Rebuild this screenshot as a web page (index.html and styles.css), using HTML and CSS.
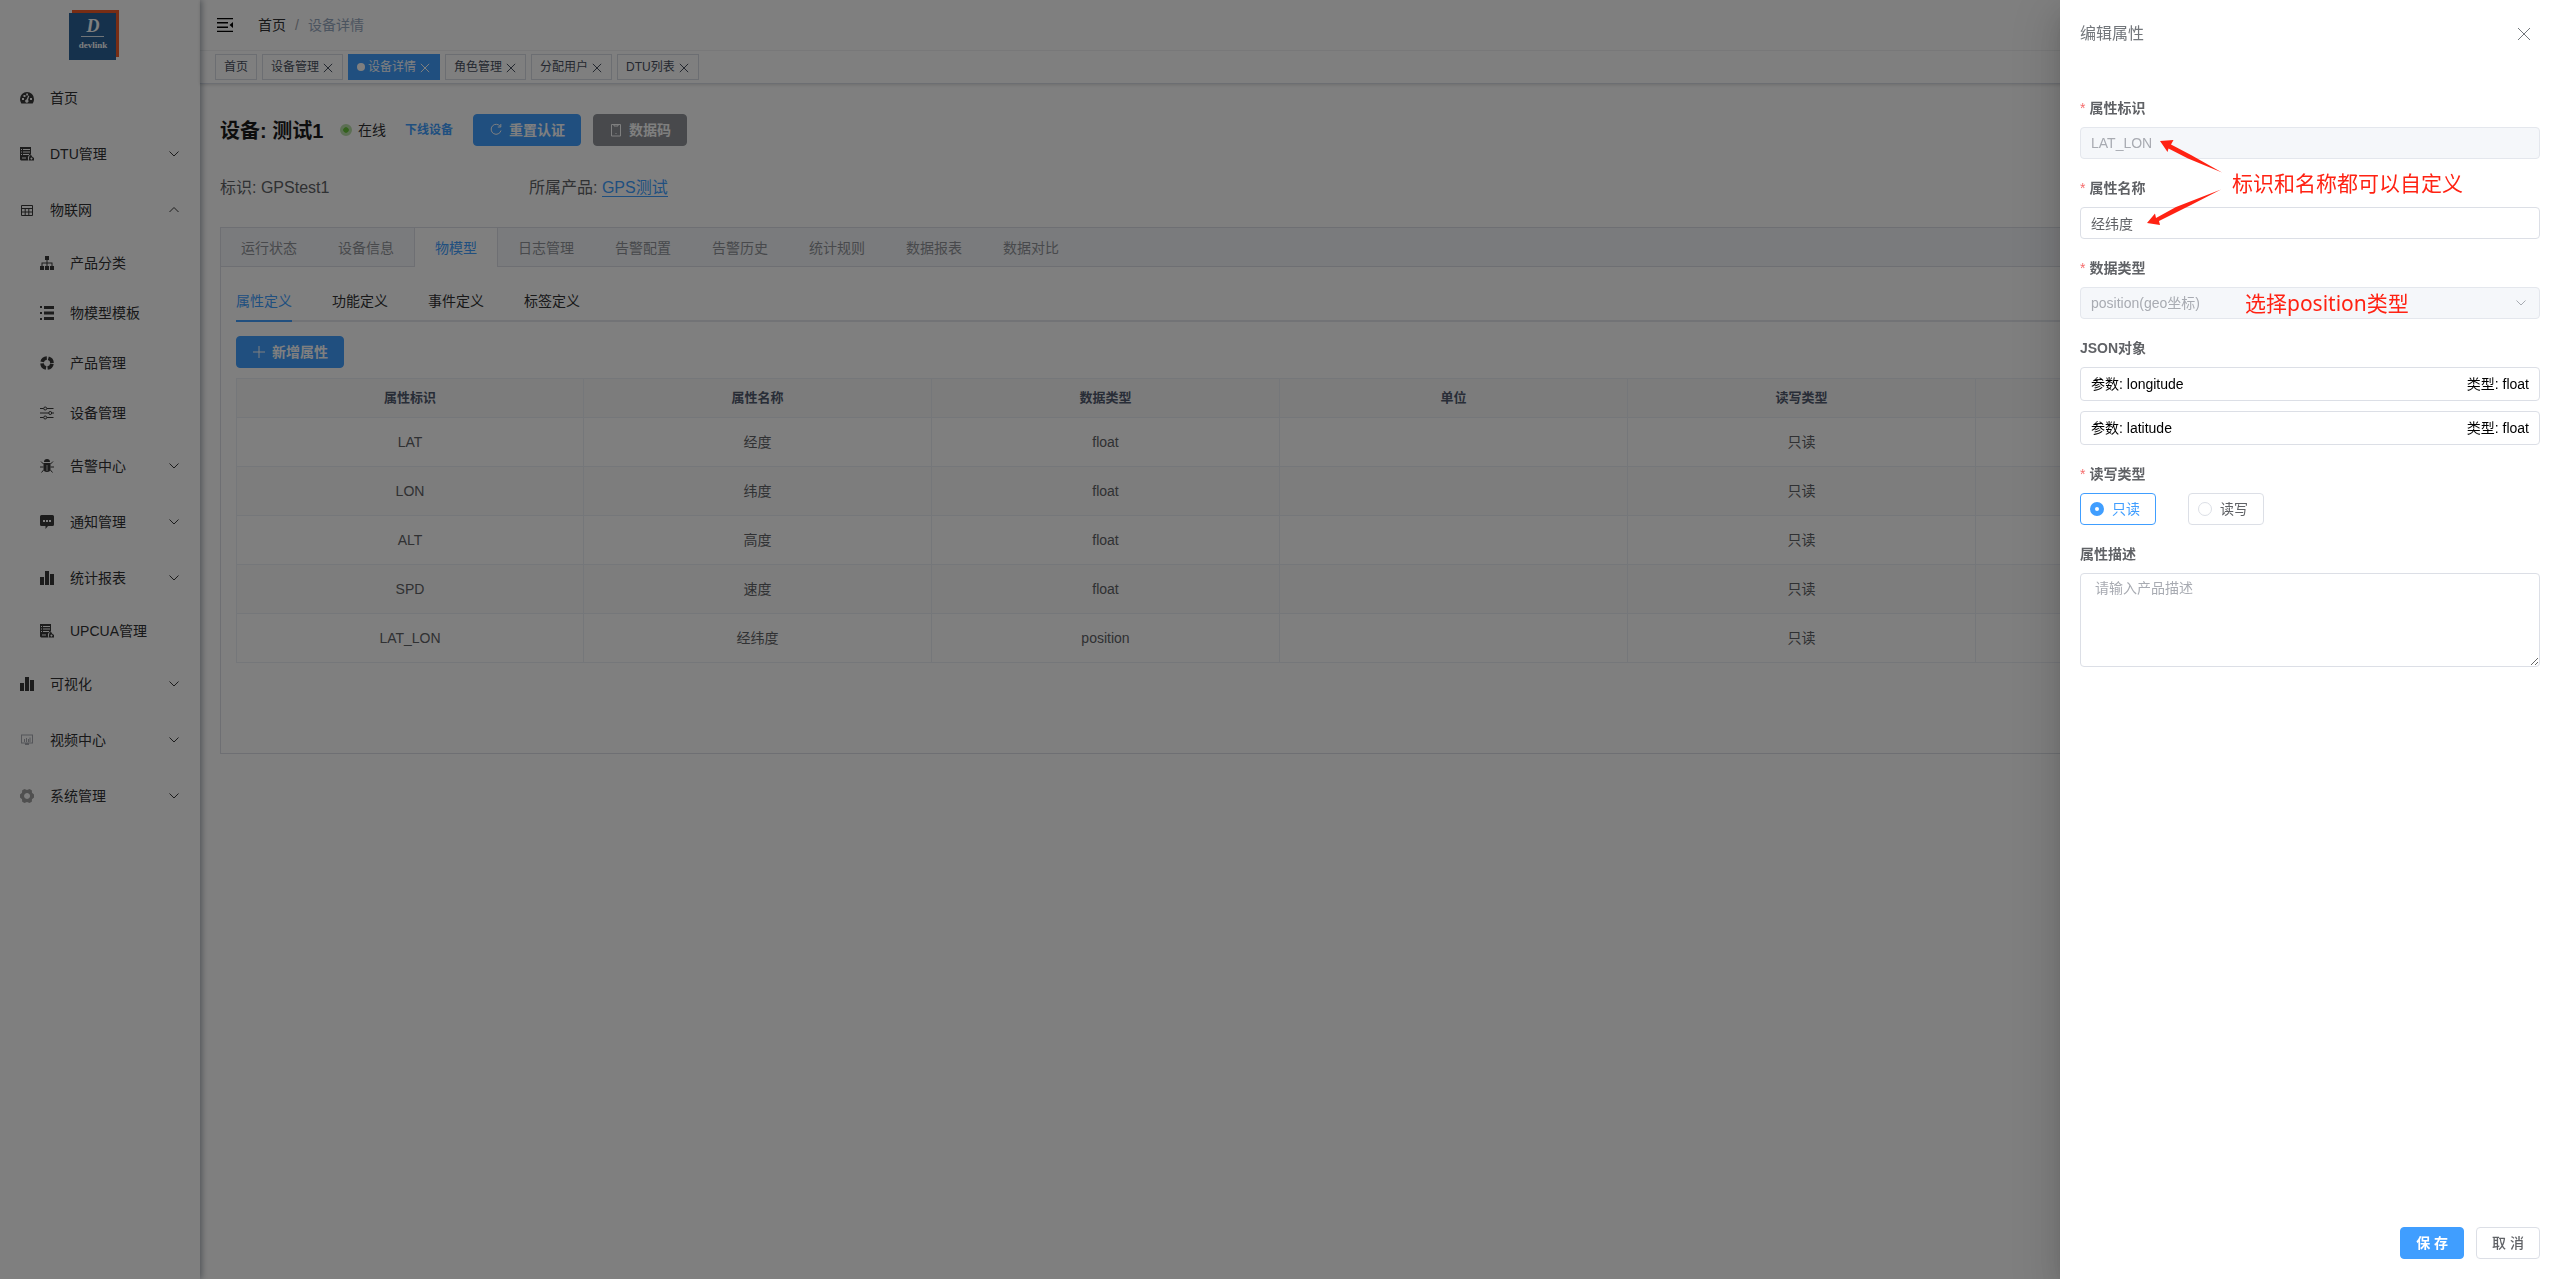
FILE: index.html
```html
<!DOCTYPE html>
<html lang="zh-CN">
<head>
<meta charset="utf-8">
<title>设备详情</title>
<link rel="stylesheet" href="styles.css">
</head>
<body>
<svg class="sprite" aria-hidden="true">
  <symbol id="i-down" viewBox="0 0 12 12"><path d="M1.5 3.5 6 8l4.500-4.500" fill="none" stroke="currentColor"/></symbol>
  <symbol id="i-up" viewBox="0 0 12 12"><path d="M1.500 8 6 3.500 10.500 8" fill="none" stroke="currentColor"/></symbol>
  <symbol id="i-close" viewBox="0 0 12 12"><path d="M1 1l10 10M11 1 1 11" fill="none" stroke="currentColor" stroke-width="1.200"/></symbol>
  <symbol id="i-dash" viewBox="0 0 14 14"><path fill-rule="evenodd" d="M7 1a7 7 0 0 1 7 7c0 1.800-.5 3.200-1.300 4.500H1.300A8 8 0 0 1 0 8a7 7 0 0 1 7-7ZM2 7v2h2V7Zm1.500-3v2h2V4ZM6.200 2.500v2h1.800v-2ZM10 7v2h2V7ZM8.300 4.500 6.500 8.500a1.600 1.600 0 1 0 1.500.5l1.300-4Z"/></symbol>
  <symbol id="i-form" viewBox="0 0 14 14"><path fill-rule="evenodd" d="M0 0h11v7.500a3.500 3.500 0 0 0-3 4.500l.5 1.500H1L0 12.500ZM1 2v1h1V2Zm2 0v1h7V2ZM1 4.500v1h1v-1Zm2 0v1h7v-1ZM1 7v1h1V7Zm2 0v1h6V7ZM2 10.500h4v1H2Z"/><path fill-rule="evenodd" d="M10.500 8a1.500 1.500 0 0 1 1.500 1.500l2 1.500v2.500H9V11l.3-1.500A1.500 1.500 0 0 1 10.500 8Zm.9 2.600a1 1 0 1 0 .1 0Z"/></symbol>
  <symbol id="i-table" viewBox="0 0 14 14"><path fill="none" stroke="currentColor" d="M1.500 2.500h11v10h-11ZM1.500 5.500h11M1.500 9h11M5.200 5.500v7M8.800 5.500v7"/></symbol>
  <symbol id="i-tree" viewBox="0 0 14 14"><path d="M5 0h4v4H7.500v2.500h5V10H14v4h-4v-4h1.500V7.500h-4V10H9v4H5v-4h1.500V7.500h-4V10H4v4H0v-4h1.500V6.500h5V4H5Z"/></symbol>
  <symbol id="i-list" viewBox="0 0 14 14"><path d="M0 0h2v2H0Zm4 0h10v3H4ZM0 6h2v2H0Zm4-.5h10v3H4ZM0 12h2v2H0Zm4-1h10v3H4Z"/></symbol>
  <symbol id="i-ring" viewBox="0 0 14 14"><circle cx="7" cy="7" r="5" fill="none" stroke="currentColor" stroke-width="3.600" stroke-dasharray="6.250 1.604" stroke-dashoffset="-.8"/></symbol>
  <symbol id="i-tune" viewBox="0 0 14 14"><path d="M0 2.500h3.500M7 2.500h6.500M0 7h8.500M12 7h2M0 11.500h3.500M7 11.500h6.500" stroke="currentColor" fill="none"/><g fill="none" stroke="currentColor"><circle cx="5.200" cy="2.500" r="1.500"/><circle cx="10.200" cy="7" r="1.500"/><circle cx="5.200" cy="11.500" r="1.500"/></g></symbol>
  <symbol id="i-bug" viewBox="0 0 14 14"><path d="M4 3a3 3 0 0 1 6 0ZM3.500 4h7v5.500a3.500 3.500 0 0 1-7 0Z"/><path d="M1 2.500 3.500 5M13 2.500 10.500 5M0 8h3.500M10.500 8H14M1.500 13.500 4 10.500M12.500 13.500 10 10.500" stroke="currentColor" fill="none"/><path d="M7 6v6" stroke="#fff" stroke-width=".7"/></symbol>
  <symbol id="i-msg" viewBox="0 0 14 14"><path fill-rule="evenodd" d="M1.500 0h11A1.500 1.500 0 0 1 14 1.500v8a1.500 1.500 0 0 1-1.500 1.500H8l-2.500 3V11h-4A1.500 1.500 0 0 1 0 9.500v-8A1.500 1.500 0 0 1 1.500 0ZM3 5v2h2V5Zm3 0v2h2V5Zm3 0v2h2V5Z"/></symbol>
  <symbol id="i-bars" viewBox="0 0 14 14"><path d="M0 6h4v8H0ZM5 0h4v14H5ZM10 3h4v11h-4Z"/></symbol>
  <symbol id="i-screen" viewBox="0 0 14 14"><path fill-rule="evenodd" d="M1 1.500h12v9H9v1.500H5v-1.500H1ZM2 2.500v7h10v-7ZM4 6h1v3H4Zm2-1h1v4H6Zm2 1h1v3H8Zm1.500-1.500h1V9h-1Z"/></symbol>
  <symbol id="i-gear" viewBox="0 0 14 14"><path fill-rule="evenodd" d="M4.500 0 7 1l2.500-1 2.300 1.300.2 2.500 2 1.700v3L12 10.200l-.2 2.500L9.500 14 7 13l-2.500 1-2.300-1.300L2 10.200 0 8.500v-3l2-1.700.2-2.500ZM7 4a3 3 0 1 0 .1 0Z"/></symbol>
</svg>

<div class="app">
  <aside class="sidebar">
    <div class="logo">
      <svg width="50" height="50" viewBox="0 0 50 50" role="img" aria-label="devlink">
        <path d="M3 0h47v47H3Z" fill="#f05a28"/><path d="M0 3h47v47H0Z" fill="#2b6299"/>
        <path d="M12 26.500h23" stroke="#dfe8f0"/>
        <text x="24" y="22" class="logo-d">D</text>
        <text x="24" y="38" class="logo-name">devlink</text>
      </svg>
    </div>
    <nav class="menu">
      <a href="#" class="item"><svg><use href="#i-dash"/></svg><span>首页</span></a>
      <a href="#" class="item"><svg><use href="#i-form"/></svg><span>DTU管理</span><svg class="arrow"><use href="#i-down"/></svg></a>
      <a href="#" class="item"><svg><use href="#i-table"/></svg><span>物联网</span><svg class="arrow"><use href="#i-up"/></svg></a>
      <a href="#" class="item sub leaf"><svg><use href="#i-tree"/></svg><span>产品分类</span></a>
      <a href="#" class="item sub leaf"><svg><use href="#i-list"/></svg><span>物模型模板</span></a>
      <a href="#" class="item sub leaf"><svg><use href="#i-ring"/></svg><span>产品管理</span></a>
      <a href="#" class="item sub leaf"><svg><use href="#i-tune"/></svg><span>设备管理</span></a>
      <a href="#" class="item sub"><svg><use href="#i-bug"/></svg><span>告警中心</span><svg class="arrow"><use href="#i-down"/></svg></a>
      <a href="#" class="item sub"><svg><use href="#i-msg"/></svg><span>通知管理</span><svg class="arrow"><use href="#i-down"/></svg></a>
      <a href="#" class="item sub"><svg><use href="#i-bars"/></svg><span>统计报表</span><svg class="arrow"><use href="#i-down"/></svg></a>
      <a href="#" class="item sub leaf"><svg><use href="#i-form"/></svg><span>UPCUA管理</span></a>
      <a href="#" class="item"><svg><use href="#i-bars"/></svg><span>可视化</span><svg class="arrow"><use href="#i-down"/></svg></a>
      <a href="#" class="item"><svg class="pale"><use href="#i-screen"/></svg><span>视频中心</span><svg class="arrow"><use href="#i-down"/></svg></a>
      <a href="#" class="item"><svg class="soft"><use href="#i-gear"/></svg><span>系统管理</span><svg class="arrow"><use href="#i-down"/></svg></a>
    </nav>
  </aside>

  <div class="main">
    <header class="top">
      <div class="navbar">
        <button class="fold" type="button" aria-label="收起菜单"><svg width="16" height="14" viewBox="0 0 16 14"><path d="M0 0h16v1.200H0ZM0 4h11v1.500H0ZM0 8.500h11V10H0ZM0 12.800h16V14H0ZM16 4v6l-3.500-3Z"/></svg></button>
        <nav class="crumbs"><a href="#">首页</a><span class="sep">/</span><span class="here">设备详情</span></nav>
      </div>
      <div class="tags">
        <a href="#" class="tag">首页</a>
        <a href="#" class="tag">设备管理<svg><use href="#i-close"/></svg></a>
        <a href="#" class="tag on">设备详情<svg><use href="#i-close"/></svg></a>
        <a href="#" class="tag">角色管理<svg><use href="#i-close"/></svg></a>
        <a href="#" class="tag">分配用户<svg><use href="#i-close"/></svg></a>
        <a href="#" class="tag">DTU列表<svg><use href="#i-close"/></svg></a>
      </div>
    </header>

    <main class="content">
      <div class="head">
        <h1>设备: 测试1</h1>
        <span class="state">在线</span>
        <a href="#" class="offline">下线设备</a>
        <button type="button" class="btn primary"><svg viewBox="0 0 14 14"><path d="M11.300 3.500A5 5 0 1 0 12 7.500M11.800 1v3H8.800" fill="none" stroke="currentColor"/></svg>重置认证</button>
        <button type="button" class="btn info"><svg viewBox="0 0 14 14"><path d="M2.500 1.500h9v11.500h-9ZM5 1.500v1.500h4v-1.500M6.500 10.500h1" fill="none" stroke="currentColor"/></svg>数据码</button>
      </div>
      <div class="facts">
        <span>标识: GPStest1</span>
        <span>所属产品: <a href="#">GPS测试</a></span>
      </div>

      <section class="card">
        <div class="tabs">
          <button type="button">运行状态</button><button type="button">设备信息</button><button type="button" class="on">物模型</button><button type="button">日志管理</button><button type="button">告警配置</button><button type="button">告警历史</button><button type="button">统计规则</button><button type="button">数据报表</button><button type="button">数据对比</button>
        </div>
        <div class="pane">
          <div class="subtabs">
            <button type="button" class="on">属性定义</button><button type="button">功能定义</button><button type="button">事件定义</button><button type="button">标签定义</button>
          </div>
          <button type="button" class="btn primary"><svg viewBox="0 0 14 14"><path d="M7 1v12M1 7h12" fill="none" stroke="currentColor"/></svg>新增属性</button>
          <table class="grid">
            <colgroup><col><col><col><col><col><col><col class="ops"></colgroup>
            <thead><tr><th>属性标识</th><th>属性名称</th><th>数据类型</th><th>单位</th><th>读写类型</th><th></th><th></th></tr></thead>
            <tbody>
              <tr><td>LAT</td><td>经度</td><td>float</td><td></td><td>只读</td><td></td><td></td></tr>
              <tr><td>LON</td><td>纬度</td><td>float</td><td></td><td>只读</td><td></td><td></td></tr>
              <tr><td>ALT</td><td>高度</td><td>float</td><td></td><td>只读</td><td></td><td></td></tr>
              <tr><td>SPD</td><td>速度</td><td>float</td><td></td><td>只读</td><td></td><td></td></tr>
              <tr><td>LAT_LON</td><td>经纬度</td><td>position</td><td></td><td>只读</td><td></td><td></td></tr>
            </tbody>
          </table>
        </div>
      </section>
    </main>
  </div>
</div>

<div class="overlay">
  <section class="drawer" role="dialog" aria-labelledby="dt">
    <header class="drawer-head"><h2 id="dt">编辑属性</h2><button type="button" aria-label="关闭"><svg viewBox="0 0 12 12"><path d="M0 0l12 12M12 0 0 12" fill="none" stroke="currentColor"/></svg></button></header>
    <form class="form">
      <div class="field"><label for="f1" class="req">属性标识</label><input id="f1" type="text" value="LAT_LON" disabled></div>
      <div class="field"><label for="f2" class="req">属性名称</label><input id="f2" type="text" value="经纬度"></div>
      <div class="field"><label for="f3" class="req">数据类型</label>
        <div class="select"><select id="f3" disabled><option>position(geo坐标)</option></select><svg><use href="#i-down"/></svg></div></div>
      <div class="field"><span class="label">JSON对象</span>
        <div class="params">
          <div class="param"><span>参数: longitude</span><span>类型: float</span></div>
          <div class="param"><span>参数: latitude</span><span>类型: float</span></div>
        </div></div>
      <div class="field"><span class="label req">读写类型</span>
        <div class="radios">
          <label class="radio"><input type="radio" name="rw" checked>只读</label>
          <label class="radio"><input type="radio" name="rw">读写</label>
        </div></div>
      <div class="field"><label for="f6">属性描述</label><textarea id="f6" placeholder="请输入产品描述"></textarea></div>
    </form>
    <footer class="drawer-foot"><button type="button" class="btn primary">保 存</button><button type="button" class="btn">取 消</button></footer>

    <svg class="arrows" width="80" height="90" viewBox="0 0 80 90" aria-hidden="true"><path fill="#ff2213" d="M15 6 28.500 5 26 9.500 46 20 77 37.500 43 23.500 23.500 13.500 22.500 17Z"/><path fill="#ff2213" d="M2 88 10 78.500 11 83 31 72 76 54.500 46 70 14 86 15 90Z"/></svg>
    <p class="note note-name">标识和名称都可以自定义</p>
    <p class="note note-type">选择position类型</p>
  </section>
</div>
</body>
</html>
```
FILE: styles.css
```css
* { box-sizing: border-box; }
body {
  margin: 0;
  font: 14px/20px "Liberation Sans", "Noto Sans CJK SC", sans-serif;
  color: #303133;
  background: #fff;
}
button, input, select, textarea { font: inherit; color: inherit; }
button { background: none; border: 0; padding: 0; }
a { color: inherit; text-decoration: none; }
h1, h2, p { margin: 0; }
svg { fill: currentColor; flex: none; }
.sprite { position: absolute; width: 0; height: 0; }

.app { display: flex; min-height: 100vh; }

/* sidebar */
.sidebar { width: 200px; flex: none; box-shadow: 2px 0 6px rgba(0, 21, 41, .35); z-index: 1; }
.logo { height: 70px; padding: 10px 0 0 69px; }
.logo-d { font: italic bold 18px "Liberation Serif", serif; fill: #fff; text-anchor: middle; }
.logo-name { font: bold 9px "Liberation Serif", serif; fill: #fff; text-anchor: middle; }
.item { display: flex; align-items: center; height: 56px; padding: 0 20px; gap: 16px; color: #303133; }
.item svg { width: 14px; height: 14px; color: #383838; }
.item.sub { padding-left: 40px; }
.item.leaf { height: 50px; }
.item .arrow { width: 12px; height: 12px; margin-left: auto; }
.item .pale { color: #a8abb2; }
.item .soft { color: #a0a0a0; }

/* header */
.main { flex: 1; min-width: 0; }
.top { height: 84px; border-bottom: 1px solid #d8dce5; box-shadow: 0 1px 3px rgba(0, 0, 0, .15); }
.navbar { display: flex; align-items: center; height: 51px; padding: 0 17px; gap: 25px; border-bottom: 1px solid #f0f1f2; }
.fold { display: flex; color: #000; }
.crumbs { display: flex; gap: 9px; }
.sep { color: #a0a4ac; }
.here { color: #97a8be; }
.tags { display: flex; gap: 5px; padding: 3px 15px; }
.tag { display: flex; align-items: center; height: 26px; padding: 0 8px; border: 1px solid #d8dce5; font-size: 12px; color: #495060; }
.tag svg { width: 10px; height: 10px; margin: 2px 1px 0 4px; }
.tag.on { background: #409eff; border-color: #409eff; color: #fff; }
.tag.on::before { content: ""; width: 8px; height: 8px; margin-right: 3px; border-radius: 50%; background: #fff; }

/* page */
.content { padding: 30px 20px; }
.head { display: flex; align-items: center; height: 32px; }
h1 { font-size: 20px; line-height: 32px; padding-top: 2px; color: #1b1b1b; width: 120px; white-space: nowrap; }
.state { display: flex; align-items: center; gap: 6px; width: 65px; }
.state::before { content: ""; width: 6px; height: 6px; border: 3px solid #b9dfa8; border-radius: 50%; background: #67c23a; background-clip: padding-box; box-sizing: content-box; }
.offline { width: 68px; font-size: 12px; font-weight: bold; color: #409eff; }
.btn { display: inline-flex; align-items: center; justify-content: center; gap: 6px; height: 32px; padding: 0 15px; border: 1px solid #dcdfe6; border-radius: 4px; color: #606266; font-weight: 500; white-space: nowrap; }
.btn svg { width: 14px; height: 14px; }
.btn + .btn { margin-left: 12px; }
.primary { background: #409eff; border-color: #409eff; color: #fff; font-weight: bold; }
.info { background: #909399; border-color: #909399; color: #fff; font-weight: bold; }
.facts { display: flex; margin: 31px 0 28px; font-size: 16px; line-height: 22px; color: #606266; }
.facts span { width: 309px; }
.facts a { color: #409eff; border-bottom: 1px solid #409eff; }

/* card with tabs */
.card { border: 1px solid #dcdfe6; min-height: 527px; }
.tabs { display: flex; height: 39px; background: #f5f7fa; border-bottom: 1px solid #dcdfe6; }
.tabs button { height: 39px; padding: 0 20px; margin-left: -1px; border: 1px solid transparent; border-width: 0 1px; color: #909399; }
.tabs .on { color: #409eff; background: #fff; border-color: #dcdfe6; }
.pane { padding: 15px; }
.subtabs { display: flex; gap: 40px; height: 40px; margin-bottom: 14px; box-shadow: inset 0 -2px #e4e7ed; }
.subtabs button { border-bottom: 2px solid transparent; }
.subtabs .on { color: #409eff; border-color: #409eff; }
.grid { width: 100%; margin-top: 10px; table-layout: fixed; border-collapse: separate; border-spacing: 0; text-align: center; color: #606266; }
.grid .ops { width: 200px; }
.grid th, .grid td { border: 0 solid #ebeef5; border-width: 0 1px 1px 0; padding: 0; height: 49px; }
.grid th { height: 40px; border-top-width: 1px; background: #f8f8f9; font-size: 13px; color: #515a6e; }
.grid th:first-child, .grid td:first-child { border-left-width: 1px; }
.grid tbody tr:nth-child(even) { background: #fafafa; }

/* drawer */
.overlay { position: fixed; inset: 0; display: flex; justify-content: flex-end; background: rgba(0, 0, 0, .5); z-index: 10; }
.drawer { position: relative; display: flex; flex-direction: column; width: 500px; background: #fff; box-shadow: 0 16px 48px 16px rgba(0, 0, 0, .08), 0 12px 32px rgba(0, 0, 0, .12), 0 8px 16px -8px rgba(0, 0, 0, .16); }
.drawer-head { display: flex; align-items: center; justify-content: space-between; padding: 24px 30px 43px 20px; color: #72767b; }
h2 { font-size: 16px; line-height: 20px; font-weight: normal; }
.drawer-head button { display: flex; }
.drawer-head svg { width: 12px; height: 12px; }
.form { flex: 1; padding: 10px 20px; color: #606266; }
.field { display: flex; flex-direction: column; gap: 8px; margin-bottom: 18px; }
.field > label, .label { line-height: 22px; font-weight: bold; }
.req::before { content: "*"; margin-right: 4px; color: #f56c6c; font-weight: normal; }
.field > input, .select select, textarea, .param { width: 100%; border: 1px solid #dcdfe6; border-radius: 4px; background: #fff; }
.field > input, .select select { height: 32px; padding: 0 10px; appearance: none; opacity: 1; }
.field > input:disabled, .select select:disabled { background: #f5f7fa; border-color: #e4e7ed; color: #a8abb2; }
.select { display: grid; align-items: center; }
.select > * { grid-area: 1 / 1; }
.select svg { width: 12px; height: 12px; justify-self: end; margin-right: 13px; color: #a8abb2; }
.params { display: grid; gap: 10px; }
.param { display: flex; justify-content: space-between; padding: 6px 10px; color: #000; }
.radios { display: flex; gap: 32px; }
.radio { display: flex; align-items: center; gap: 8px; height: 32px; padding: 0 15px 0 9px; border: 1px solid #dcdfe6; border-radius: 4px; }
.radio input { appearance: none; width: 14px; height: 14px; margin: 0; border: 1px solid #dcdfe6; border-radius: 50%; }
.radio:has(:checked) { border-color: #409eff; color: #409eff; }
.radio input:checked { border: 5px solid #409eff; }
textarea { display: block; height: 94px; padding: 4px 14px; }
textarea::placeholder { color: #a8abb2; }
.drawer-foot { display: flex; justify-content: flex-end; padding: 20px; }

/* annotations over the form */
.arrows { position: absolute; left: 85px; top: 135px; }
.note { position: absolute; font: 21px/28px "Noto Sans", "Noto Sans CJK SC", sans-serif; color: #ff2213; white-space: nowrap; }
.note-name { left: 172px; top: 168px; font-family: "Noto Sans CJK SC", sans-serif; }
.note-type { left: 185px; top: 289px; }
```
